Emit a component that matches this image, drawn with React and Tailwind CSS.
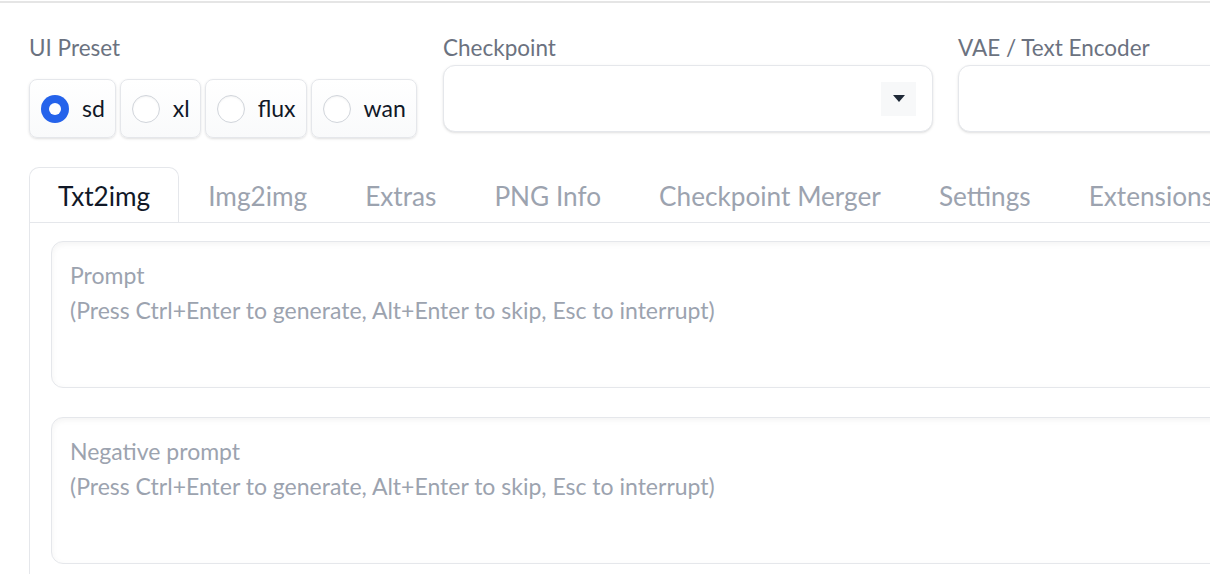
import React from 'react';

const presets = ['sd', 'xl', 'flux', 'wan'];
const tabs = ['Txt2img', 'Img2img', 'Extras', 'PNG Info', 'Checkpoint Merger', 'Settings', 'Extensions'];

const Caret = () => (
  <div className="w-[35px] h-[34px] bg-[#f7f8f9] flex items-center justify-center">
    <svg width="12" height="7" viewBox="0 0 12 7">
      <polygon points="0,0 12,0 6,7" fill="#1f2937" />
    </svg>
  </div>
);

const Dropdown = ({ label }) => (
  <div className="w-[490px] shrink-0">
    <div className="h-[24px] leading-[24px] text-[22.5px] text-[#6b7280]">{label}</div>
    <div className="mt-[5px] h-[67px] rounded-[12px] border border-[#e5e7eb] bg-white shadow-sm flex items-center justify-end pr-[16px]">
      <Caret />
    </div>
  </div>
);

const PromptBox = ({ title }) => (
  <div className="h-[147px] rounded-[12px] border border-[#e5e7eb] bg-white shadow-[inset_0_2px_6px_rgba(0,0,0,0.05)] px-[18px] pt-[16px] text-[23px] leading-[35px] text-[#9ca3af] whitespace-nowrap">
    <div>{title}</div>
    <div>(Press Ctrl+Enter to generate, Alt+Enter to skip, Esc to interrupt)</div>
  </div>
);

export default function App() {
  return (
    <div className="w-[1210px] h-[574px] overflow-hidden bg-white font-['Lato',sans-serif]">
      <div className="mt-px h-[2px] bg-[#e5e5e5]" />
      <div className="pl-[29px] pt-[33px] w-[1500px]">
        <div className="flex items-start gap-[25px]">
          <div className="w-[389px] shrink-0">
            <div className="h-[24px] leading-[24px] text-[22.5px] text-[#6b7280]">UI Preset</div>
            <div className="mt-[19px] flex gap-[4px]">
              {presets.map((p, i) => (
                <div
                  key={p}
                  className="h-[59px] rounded-[8px] border border-[#e5e7eb] bg-gradient-to-b from-white to-[#f9fafb] shadow-sm flex items-center pl-[11px] pr-[10px] gap-[13px]"
                >
                  {i === 0 ? (
                    <span className="w-[28px] h-[28px] rounded-full bg-[#2563eb] flex items-center justify-center">
                      <span className="w-[12px] h-[12px] rounded-full bg-white" />
                    </span>
                  ) : (
                    <span className="w-[28px] h-[28px] rounded-full border border-[#d1d5db] bg-white shadow-[inset_0_1px_2px_rgba(0,0,0,0.05)]" />
                  )}
                  <span className="text-[23px] text-[#111827]">{p}</span>
                </div>
              ))}
            </div>
          </div>
          <Dropdown label="Checkpoint" />
          <Dropdown label="VAE / Text Encoder" />
        </div>

        <div className="mt-[29px] flex border-b border-[#e5e7eb]">
          {tabs.map((t, i) => (
            <div
              key={t}
              className={
                i === 0
                  ? 'h-[55px] -mb-px pt-[4px] px-[28px] flex items-center border border-b-0 border-[#e5e7eb] rounded-t-[10px] bg-white text-[26.2px] text-[#111827] whitespace-nowrap'
                  : 'h-[55px] pt-[4px] px-[28px] flex items-center border border-transparent text-[26.2px] text-[#9ca3af] whitespace-nowrap'
              }
            >
              {t}
            </div>
          ))}
        </div>

        <div className="border-l border-r border-[#e5e7eb] pl-[21px] pr-[21px] pt-[18px] pb-[20px]">
          <PromptBox title="Prompt" />
          <div className="h-[29px]" />
          <PromptBox title="Negative prompt" />
        </div>
      </div>
    </div>
  );
}
